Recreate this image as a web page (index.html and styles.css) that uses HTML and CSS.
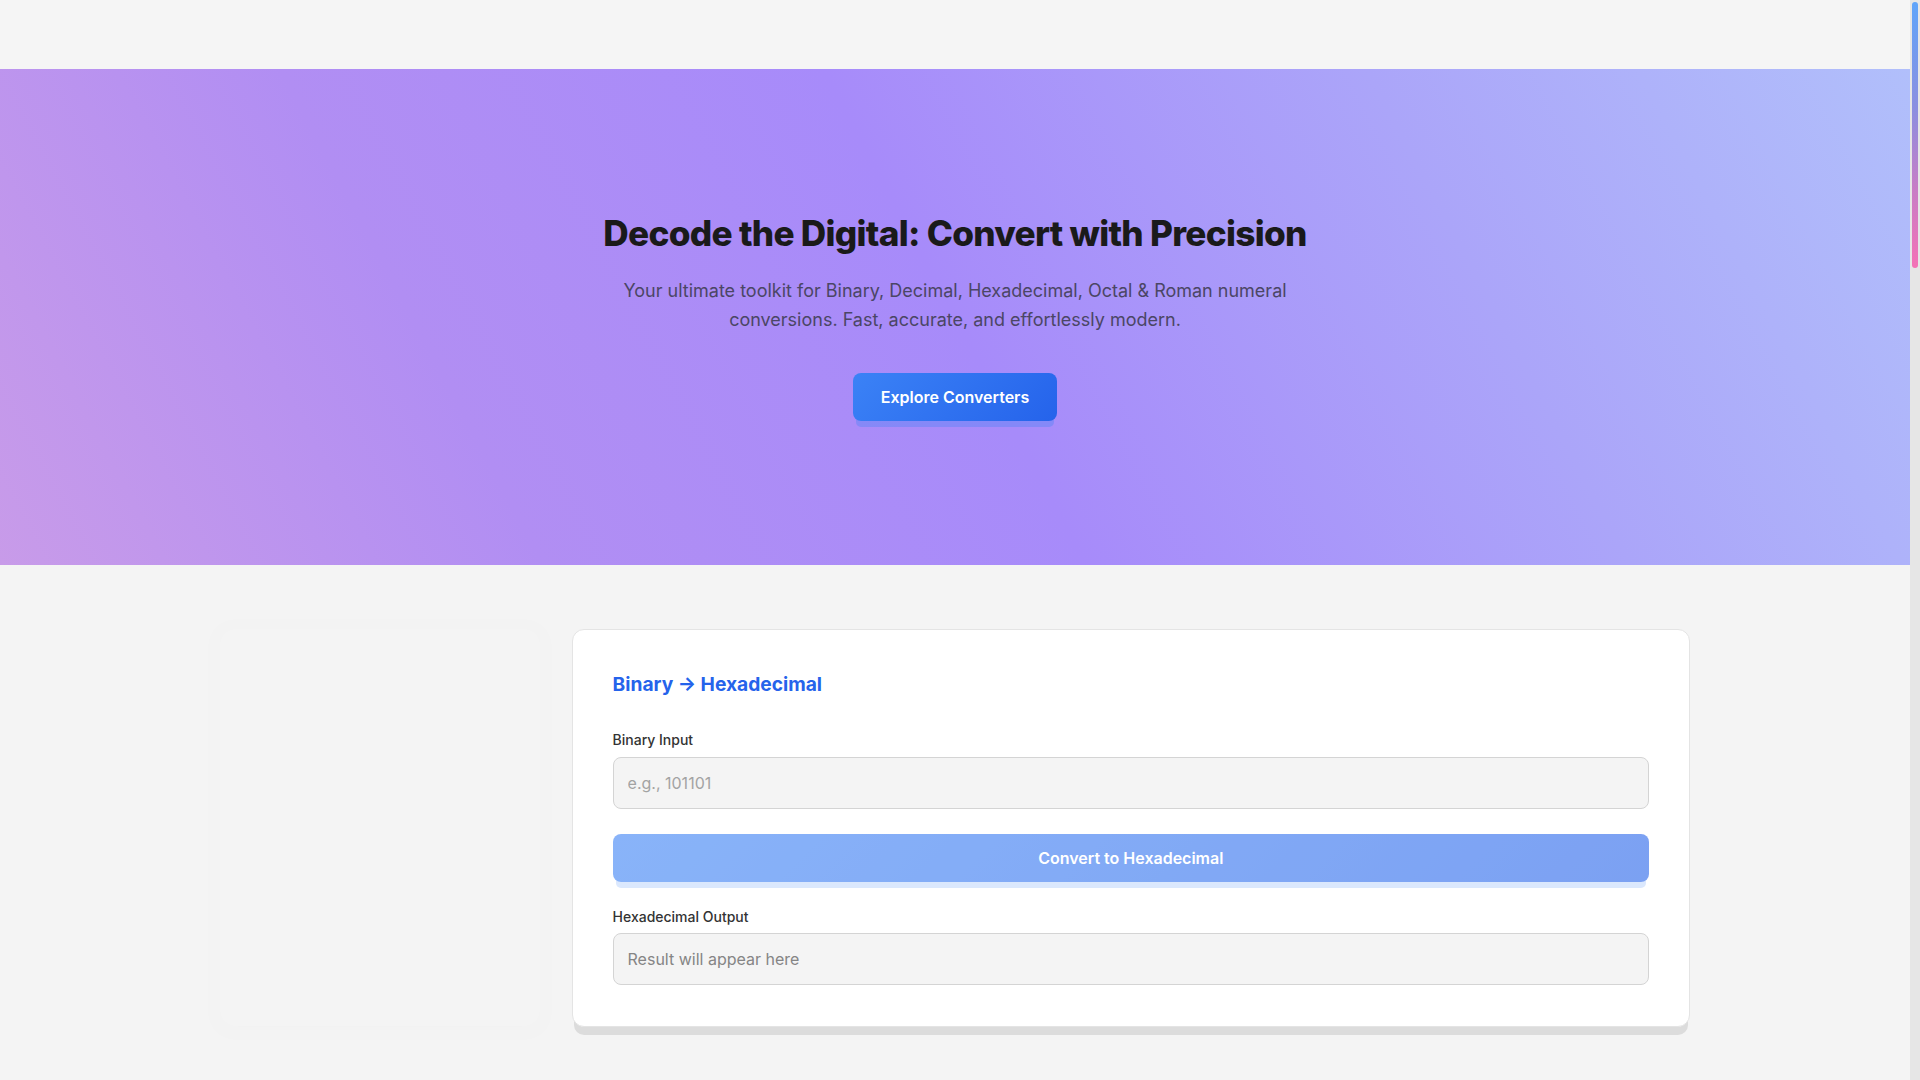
FILE: index.html
```html
<!DOCTYPE html>
<html lang="en">
<head>
<meta charset="utf-8">
<title>Decode the Digital – Number Converters</title>
<link rel="stylesheet" href="styles.css">
</head>
<body>
<header class="site-header"></header>

<section class="hero">
  <h1 class="hero-title">Decode the Digital: Convert with Precision</h1>
  <p class="hero-sub">Your ultimate toolkit for Binary, Decimal, Hexadecimal, Octal &amp; Roman numeral conversions. Fast, accurate, and effortlessly modern.</p>
  <a class="btn-primary" href="#converters">Explore Converters</a>
</section>

<main class="layout" id="converters">
  <aside class="sidebar"></aside>

  <div class="converters">
    <section class="card">
      <h2 class="card-title">Binary → Hexadecimal</h2>
      <label class="field-label" for="bin-in">Binary Input</label>
      <input class="field" id="bin-in" type="text" placeholder="e.g., 101101">
      <button class="btn-convert" disabled>Convert to Hexadecimal</button>
      <div class="field-label out-label">Hexadecimal Output</div>
      <div class="field output">Result will appear here</div>
    </section>
  </div>
</main>

<div class="scrollbar" aria-hidden="true"><div class="scrollbar-thumb"></div></div>
</body>
</html>
```

FILE: styles.css
```css
* { box-sizing: border-box; }

html { background: #f4f4f4; }

body {
  margin: 0 10px 0 0;
  font-family: Inter, "Noto Sans", "Liberation Sans", sans-serif;
  background: #f4f4f4;
  color: #1f1f1f;
}

/* decorative page scrollbar (gradient thumb) */
.scrollbar {
  position: fixed;
  top: 0;
  right: 0;
  width: 10px;
  height: 100vh;
  background: #e6e6e6;
}

.scrollbar-thumb {
  position: absolute;
  top: 2px;
  left: 2px;
  width: 6px;
  height: 266px;
  border-radius: 3px;
  background: linear-gradient(180deg, #60a5fa 0%, #8b8fe0 40%, #c77dc6 70%, #f472b6 100%);
}

.site-header {
  height: 69px;
  background: #f5f5f5;
}

.hero {
  padding: 143px 32px 144px;
  text-align: center;
  background: linear-gradient(62deg, #c89be9 0%, #b18ef3 25%, #a78bfa 50%, #aba5f9 75%, #b1bffb 100%);
}

.hero-title {
  margin: 0 0 23px;
  font-size: 35.2px;
  line-height: 42px;
  font-weight: 800;
  letter-spacing: -0.02em;
  color: #1a1a1a;
}

.hero-sub {
  max-width: 700px;
  margin: 0 auto 39px;
  font-size: 18px;
  line-height: 28.5px;
  color: #4b4665;
}

.btn-primary {
  display: inline-block;
  padding: 14px 28px;
  font-size: 16px;
  line-height: 20px;
  font-weight: 600;
  color: #fff;
  text-decoration: none;
  border-radius: 8px;
  background: linear-gradient(135deg, #3b82f6, #2563eb);
  box-shadow: 0 9px 0 -3px rgba(59, 130, 246, 0.32);
}

.layout {
  display: grid;
  grid-template-columns: 1fr 3.5fr;
  gap: 32px;
  max-width: 1470px;
  margin: 0 auto;
  padding: 64px 0;
}

.sidebar {
  align-self: start;
  height: 397px;
  border-radius: 16px;
  background: #fff;
  box-shadow: 0 2px 12px rgba(0, 0, 0, 0.3);
  opacity: 0.02;
}

.converters {
  display: flex;
  flex-direction: column;
  gap: 72px;
}

.card {
  display: flex;
  flex-direction: column;
  padding: 40px 40px 41px;
  background: #fff;
  border: 1px solid #e4e4e4;
  border-radius: 12px;
  box-shadow: 0 10px 0 -2px #dcdcdc;
}

.card-title {
  margin: 0 0 31px;
  font-size: 19.2px;
  line-height: 29px;
  font-weight: 700;
  color: #2563eb;
}

.field-label {
  font-size: 14px;
  line-height: 20px;
  font-weight: 500;
  color: #333;
}

.out-label { margin-top: 25px; }

.field {
  display: block;
  width: 100%;
  margin-top: 7px;
  padding: 15px 14px;
  font-family: inherit;
  font-size: 16px;
  line-height: 20px;
  color: #333;
  background: #f4f4f4;
  border: 1px solid #d4d4d4;
  border-radius: 8px;
  outline: none;
}

.field::placeholder { color: #a3a3a3; }

.output {
  margin-top: 6px;
  color: #858585;
}

.btn-convert {
  margin-top: 25px;
  height: 48px;
  font-family: inherit;
  font-size: 16px;
  font-weight: 600;
  color: #fff;
  border: 0;
  border-radius: 8px;
  background: linear-gradient(135deg, #3b82f6, #2563eb);
  box-shadow: 0 9px 0 -3px rgba(59, 130, 246, 0.3);
  opacity: 0.6;
}
```
